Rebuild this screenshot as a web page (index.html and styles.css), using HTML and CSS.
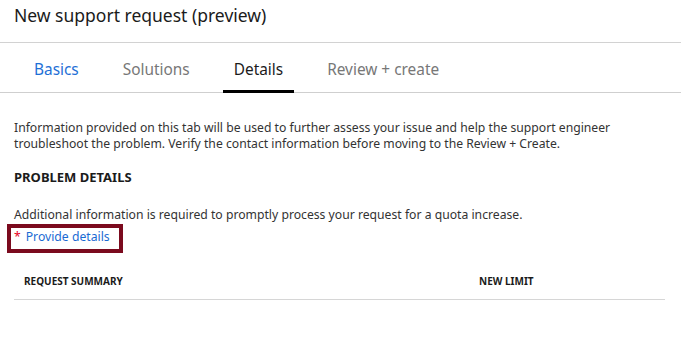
FILE: index.html
```html
<!DOCTYPE html>
<html lang="en">
<head>
<meta charset="utf-8">
<title>New support request (preview)</title>
<link rel="stylesheet" href="styles.css">
</head>
<body>
<div class="blade">
  <header class="blade-header">
    <h1 class="blade-title">New support request (preview)</h1>
  </header>
  <nav class="tabs">
    <a class="tab tab-visited">Basics</a>
    <a class="tab">Solutions</a>
    <a class="tab tab-active">Details</a>
    <a class="tab">Review + create</a>
  </nav>
  <main class="content">
    <p class="intro">Information provided on this tab will be used to further assess your issue and help the support engineer troubleshoot the problem. Verify the contact information before moving to the Review + Create.</p>
    <h2 class="section-title">PROBLEM DETAILS</h2>
    <p class="note">Additional information is required to promptly process your request for a quota increase.</p>
    <div class="highlight">
      <span class="required">*</span>
      <a class="link">Provide details</a>
    </div>
    <div class="summary">
      <div class="summary-head">
        <span class="col col-summary">REQUEST SUMMARY</span>
        <span class="col col-limit">NEW LIMIT</span>
      </div>
    </div>
  </main>
</div>
</body>
</html>
```
FILE: styles.css
```css
html, body {
  margin: 0;
  padding: 0;
  background: #ffffff;
}

body {
  font-family: "Noto Sans", "Open Sans", sans-serif;
  color: #323130;
}

.blade {
  width: 681px;
}

.blade-header {
  height: 42px;
  border-bottom: 1px solid #d2d2d2;
  padding-left: 14px;
  display: flex;
  align-items: flex-start;
}

.blade-title {
  margin: 0;
  padding-top: 3px;
  font-size: 17.5px;
  font-weight: 400;
  color: #1b1b1b;
  line-height: 24px;
}

.tabs {
  display: flex;
  gap: 22px;
  padding-left: 23px;
  height: 49px;
  border-bottom: 1px solid #cfcfcf;
}

.tab {
  display: flex;
  align-items: center;
  padding: 0 11px;
  font-size: 15.4px;
  color: #777777;
  border-bottom: 3px solid transparent;
  margin-bottom: -1px;
  padding-top: 5px;
}

.tab-visited {
  color: #1e6fd6;
}

.tab-active {
  color: #1b1b1b;
  border-bottom-color: #000000;
}

.content {
  padding: 0 14px;
}

.intro {
  margin: 0;
  padding-top: 27px;
  font-size: 12.2px;
  line-height: 16px;
  color: #333333;
}

.section-title {
  margin: 0;
  padding-top: 17px;
  font-size: 13px;
  font-weight: 700;
  line-height: 16px;
  color: #1b1b1b;
}

.note {
  margin: 0;
  padding-top: 22px;
  font-size: 12.2px;
  line-height: 16px;
  color: #333333;
}

.highlight {
  display: flex;
  align-items: flex-start;
  gap: 5px;
  width: 102px;
  height: 21px;
  margin-top: 1px;
  margin-left: -7px;
  padding: 0 3px;
  border: 4px solid #7b0a1e;
  font-size: 12.2px;
  line-height: 18px;
}

.required {
  color: #e8001c;
}

.link {
  color: #1a6ad3;
}

.summary {
  padding-top: 9px;
  padding-right: 2px;
}

.summary-head {
  display: flex;
  height: 37px;
  align-items: center;
  border-bottom: 1px solid #d6d6d6;
  font-size: 10px;
  font-weight: 700;
  color: #1b1b1b;
}

.col-summary {
  padding-left: 10px;
  width: 455px;
}
```
